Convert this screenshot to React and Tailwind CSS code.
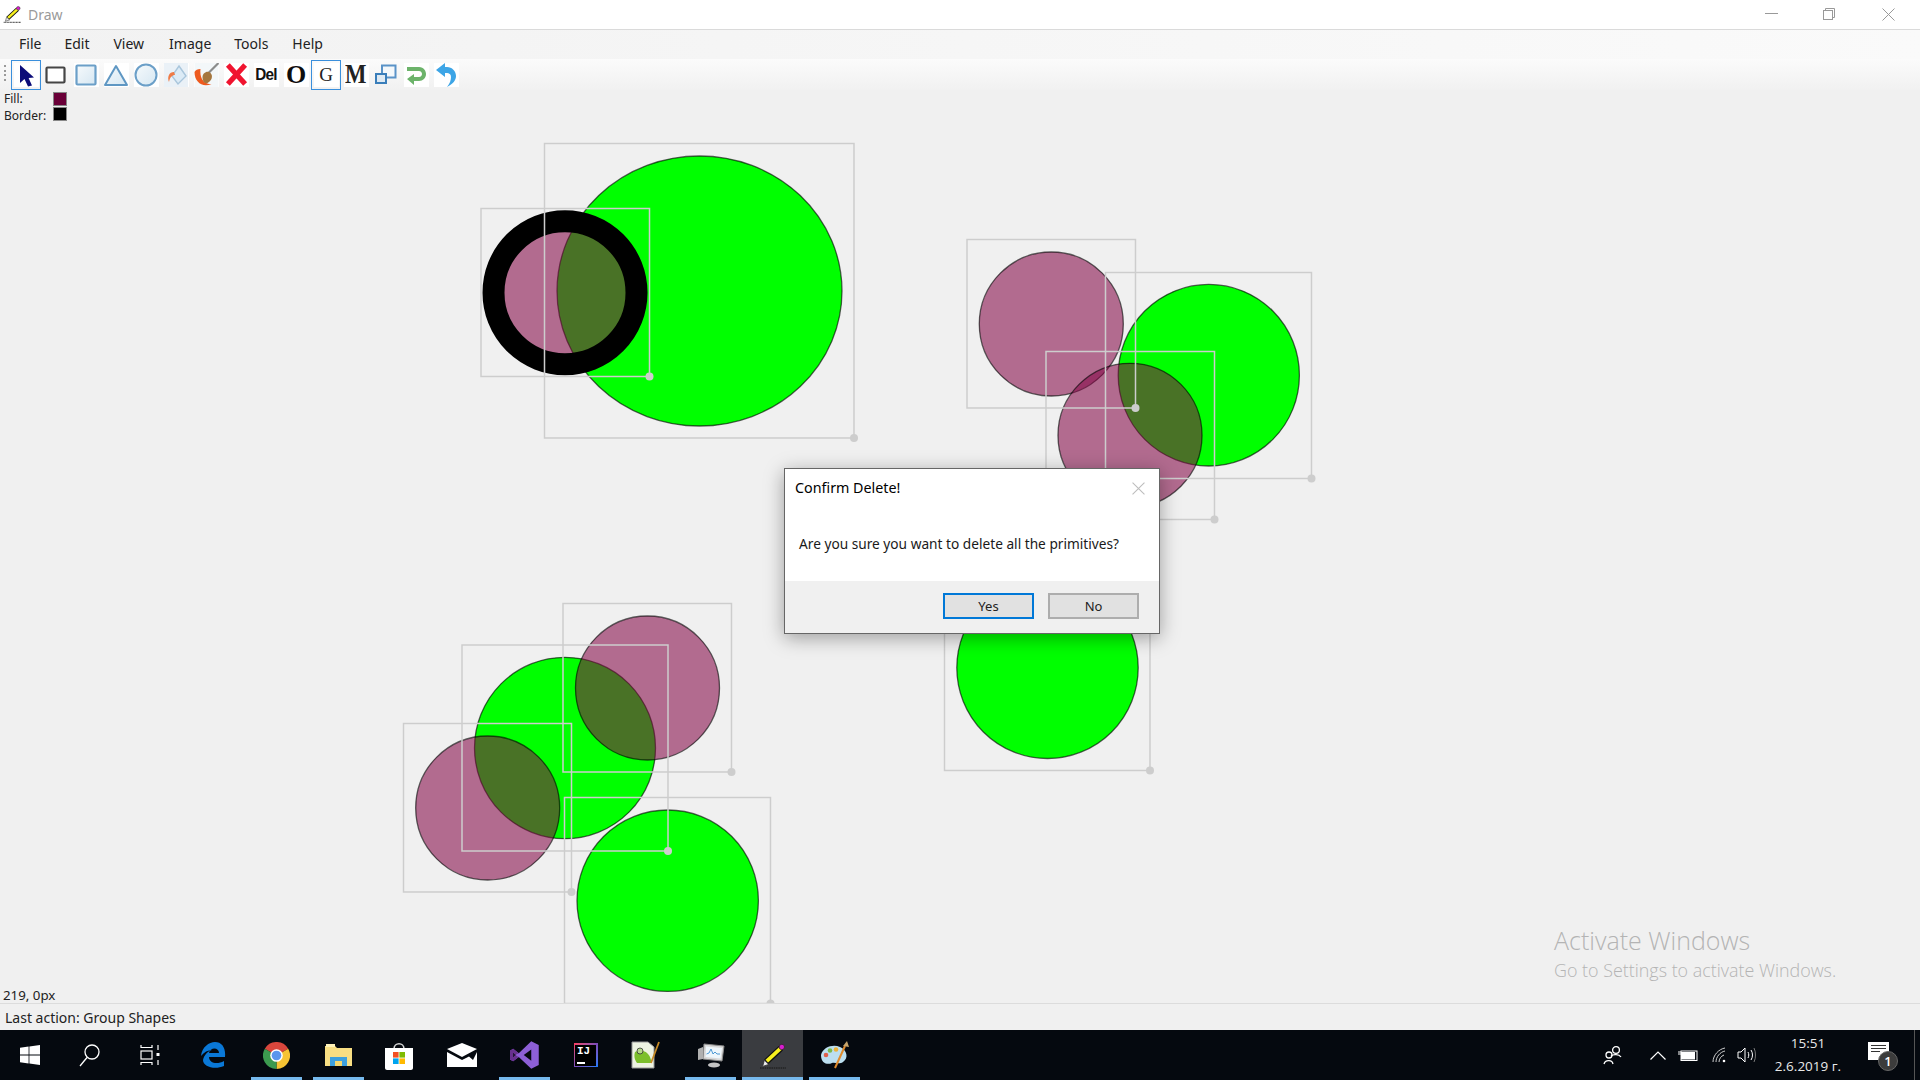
const GREEN = '#00ff00';
const PINK = '#830443';
const shapes = [
  { c: 'g', cx: 699.5, cy: 291, rx: 142.5, ry: 135 },
  { c: 'p', cx: 565, cy: 292.7, rx: 71.5, ry: 71.5, w: 22 },
  { c: 'p', cx: 1051.3, cy: 324, rx: 72, ry: 72 },
  { c: 'g', cx: 1208.8, cy: 375.2, rx: 90.6, ry: 90.8 },
  { c: 'p', cx: 1130, cy: 435.3, rx: 72, ry: 72 },
  { c: 'g', cx: 565, cy: 748, rx: 90.5, ry: 90.7 },
  { c: 'p', cx: 647.5, cy: 688, rx: 72, ry: 72 },
  { c: 'p', cx: 487.7, cy: 808, rx: 72, ry: 72 },
  { c: 'g', cx: 667.7, cy: 900.7, rx: 90.7, ry: 90.7 },
  { c: 'g', cx: 1047.5, cy: 667.8, rx: 90.7, ry: 90.7 },
];
const boxes = [
  [544.5, 143.5, 854, 438],
  [481, 208.5, 649.5, 376.5],
  [967, 239.5, 1135.5, 408],
  [1105.5, 272.5, 1311.5, 478.5],
  [1046, 351.5, 1214.5, 519.5],
  [563, 603.5, 731.5, 772],
  [462, 645, 668, 851],
  [403.5, 723.5, 571.5, 892],
  [564.5, 797.5, 770.5, 1003.5],
  [944.5, 564.5, 1150, 770.5],
];

function Pencil({ className }) {
  return (
    <svg viewBox="0 0 26 26" className={className}>
      <path d="M1 25H26" stroke="#222" strokeWidth="1.4" strokeDasharray="1.5 .7" />
      <path d="M7 19L21 6" stroke="#111" strokeWidth="6" />
      <path d="M7.5 18.5L21 6" stroke="#f7f01e" strokeWidth="3.6" />
      <path d="M3.5 23.5L5.2 17.5L9.4 21.6Z" fill="#eee" stroke="#333" strokeWidth=".8" />
      <circle cx="22" cy="4.8" r="2.6" fill="#d81ed0" stroke="#222" strokeWidth=".7" />
    </svg>
  );
}

function ToolIcon({ children, active, plain }) {
  return (
    <div className={`w-[30px] h-[30px] flex items-center justify-center ${active ? 'border border-[#3a8fdc]' : ''}`}>
      <div className={`w-[25px] h-[24px] flex items-center justify-center ${plain ? '' : 'bg-white'}`}>{children}</div>
    </div>
  );
}

const lightFill = (
  <defs>
    <linearGradient id="lf" x1="0" y1="0" x2="1" y2="1">
      <stop offset="0" stopColor="#f6fafc" />
      <stop offset="1" stopColor="#d6e7f2" />
    </linearGradient>
  </defs>
);

function Toolbar() {
  return (
    <div className="h-[31px] pl-[11px] flex items-center bg-linear-to-b from-[#fbfbfb] to-[#f1f1f1] relative">
      <div className="absolute left-[4px] top-[6px] w-[2px] h-[16px] flex flex-col justify-between">
        <span className="block w-[2px] h-[2px] bg-[#9a9a9a]" />
        <span className="block w-[2px] h-[2px] bg-[#9a9a9a]" />
        <span className="block w-[2px] h-[2px] bg-[#9a9a9a]" />
        <span className="block w-[2px] h-[2px] bg-[#9a9a9a]" />
      </div>
      <ToolIcon active>
        <svg viewBox="0 0 24 24" className="w-[24px] h-[24px]"><path d="M6 2L20 14.5L14.6 15L18 22.5L14 23.5L10.5 16L6 20Z" fill="#0b0b78" /></svg>
      </ToolIcon>
      <ToolIcon plain>
        <svg viewBox="0 0 24 24" className="w-[24px] h-[24px]"><rect x="2.5" y="4.5" width="18" height="15" rx="1" fill="#fff" stroke="#454545" strokeWidth="2.2" /></svg>
      </ToolIcon>
      <ToolIcon>
        <svg viewBox="0 0 24 24" className="w-[24px] h-[24px]">{lightFill}<rect x="2.5" y="2.5" width="19" height="19" rx="1" fill="url(#lf)" stroke="#6b9fc8" strokeWidth="2.2" /></svg>
      </ToolIcon>
      <ToolIcon>
        <svg viewBox="0 0 24 24" className="w-[24px] h-[24px]"><path d="M12 3L23 22H1Z" fill="url(#lf)" stroke="#5f97c3" strokeWidth="2" strokeLinejoin="round" /></svg>
      </ToolIcon>
      <ToolIcon>
        <svg viewBox="0 0 24 24" className="w-[24px] h-[24px]"><circle cx="12" cy="12" r="10.5" fill="url(#lf)" stroke="#6b9fc8" strokeWidth="2" /></svg>
      </ToolIcon>
      <ToolIcon>
        <svg viewBox="0 0 24 24" className="w-[24px] h-[24px]">
          <rect width="24" height="24" fill="#eaf1f7" />
          <path d="M15 3L22 13L14 21L8 13Z" fill="#dcebf6" stroke="#a9c6dc" strokeWidth="1.4" />
          <path d="M10 9C5 9 3 14 5 19C6 14 8 12 11 12Z" fill="#ef7a45" />
        </svg>
      </ToolIcon>
      <ToolIcon>
        <svg viewBox="0 0 24 24" className="w-[25px] h-[24px]">
          <rect width="24" height="24" fill="#f3f7f9" />
          <path d="M24 0L13 11" stroke="#8c8c8c" strokeWidth="2.2" />
          <path d="M0 9C0 19 8 25 17 21C9 21 5 15 6 6C3 6 1 7 0 9Z" fill="#ee5a1e" />
          <path d="M8 14C8 10 13 7 16 10C19 13 17 18 13 20C10 21 8 18 8 14Z" fill="#a5763e" />
        </svg>
      </ToolIcon>
      <ToolIcon>
        <svg viewBox="0 0 24 24" className="w-[23px] h-[23px]"><path d="M3 2L21 22M21 2L3 22" stroke="#f0142f" strokeWidth="5.4" /></svg>
      </ToolIcon>
      <ToolIcon><span className="font-['Liberation_Sans'] font-bold text-[17px] leading-none text-[#111] tracking-[-0.8px] scale-x-90">Del</span></ToolIcon>
      <ToolIcon><span className="font-['Liberation_Serif'] font-bold text-[26px] leading-none text-[#0d0d0d]">O</span></ToolIcon>
      <ToolIcon active><span className="font-['Liberation_Serif'] text-[19px] leading-none text-[#222]">G</span></ToolIcon>
      <ToolIcon><span className="font-['Liberation_Serif'] font-bold text-[27px] leading-none text-[#222] scale-x-[0.84]">M</span></ToolIcon>
      <ToolIcon plain>
        <svg viewBox="0 0 24 24" className="w-[24px] h-[24px]">
          <rect x="8" y="2.5" width="13.5" height="12" fill="#f4f8fb" stroke="#5a93c8" strokeWidth="2" />
          <rect x="2" y="11" width="10" height="9" fill="#dfeaf3" stroke="#3a7eba" strokeWidth="2" />
        </svg>
      </ToolIcon>
      <ToolIcon>
        <svg viewBox="0 0 24 24" className="w-[24px] h-[24px]"><path d="M3 4H15C20 4 22 8 22 11C22 15 19 18 15 18H10V22L3 16L10 11V14H15C17 14 18 12.5 18 11C18 9.5 17 8 15 8H3Z" fill="#6cb36a" /></svg>
      </ToolIcon>
      <ToolIcon>
        <svg viewBox="0 0 24 24" className="w-[24px] h-[24px]"><path d="M2 7L11 0V4H13C18 4 22 8 22 13C22 17 19 21 13 24C16 20 17 17 17 14C17 11 15 10 13 10H11V14Z" fill="#3da5e6" /></svg>
      </ToolIcon>
    </div>
  );
}

function Canvas() {
  return (
    <div className="relative flex-1 bg-[#f0f0f0] overflow-hidden">
      <svg viewBox="0 90 1920 913" className="absolute inset-0 w-[1920px] h-[913px]">
        {shapes.map((s, i) => (
          <ellipse key={i} cx={s.cx} cy={s.cy} rx={s.rx} ry={s.ry}
            fill={s.c === 'g' ? GREEN : PINK} fillOpacity={s.c === 'g' ? 1 : 0.5625}
            stroke="#000" strokeOpacity={s.w ? 1 : 0.62} strokeWidth={s.w || 1.3} />
        ))}
        {boxes.map(([a, b, c, d], i) => (
          <g key={i}>
            <rect x={a} y={b} width={c - a} height={d - b} fill="none" stroke="#cdcdcd" strokeWidth="1.5" />
            <circle cx={c} cy={d} r="4" fill="#cdcdcd" />
          </g>
        ))}
      </svg>
      <div className="absolute left-[4px] top-0 text-[12px] leading-[17px] text-[#222] font-['Noto_Sans',sans-serif]">
        <div>Fill:</div>
        <div>Border:</div>
      </div>
      <div className="absolute left-[53px] top-[2px] w-[14px] h-[14px] bg-[#6a0038] border border-[#888]" />
      <div className="absolute left-[53px] top-[17px] w-[14px] h-[14px] bg-black border border-[#888]" />
      <div className="absolute left-[1554px] top-[834px] font-['Open_Sans',sans-serif] font-light text-[#b4b4b4] whitespace-nowrap">
        <div className="text-[25px] leading-[32px]">Activate Windows</div>
        <div className="text-[17.9px] leading-[24px] mt-[2px]">Go to Settings to activate Windows.</div>
      </div>
      <div className="absolute left-[3px] bottom-0 text-[13.3px] leading-[16px] text-[#222] font-['Noto_Sans',sans-serif]">219, 0px</div>
    </div>
  );
}

function Dialog() {
  return (
    <div className="absolute left-[784px] top-[468px] w-[376px] h-[166px] bg-[#f0f0f0] border border-[#666] shadow-[0_4px_18px_rgba(0,0,0,0.35)] flex flex-col font-['Noto_Sans',sans-serif]">
      <div className="h-[112px] bg-white relative shrink-0">
        <div className="absolute left-[10px] top-[9px] text-[14.3px] leading-[20px] text-black">Confirm Delete!</div>
        <svg viewBox="0 0 12 12" className="absolute left-[347px] top-[13px] w-[13px] h-[13px]"><path d="M.5.5L11.5 11.5M11.5.5L.5 11.5" stroke="#bdbdbd" strokeWidth="1" /></svg>
        <div className="absolute left-[14px] top-[66px] text-[13.7px] leading-[18px] text-[#1a1a1a] whitespace-nowrap">Are you sure you want to delete all the primitives?</div>
      </div>
      <div className="flex-1 flex justify-end gap-[14px] pt-[12px] pr-[20px]">
        <button className="w-[91px] h-[26px] bg-[#e1e1e1] border-2 border-[#0078d7] text-[13px] leading-none text-[#222]">Yes</button>
        <button className="w-[91px] h-[26px] bg-[#e1e1e1] border-2 border-[#adadad] text-[13px] leading-none text-[#222]">No</button>
      </div>
    </div>
  );
}

function TaskSlot({ w, underline, active, children }) {
  return (
    <div className={`relative h-full shrink-0 flex items-center justify-center ${active ? 'bg-[#3a3c40]' : ''} ${w}`}>
      {children}
      {underline && <span className="absolute left-0 right-0 bottom-0 h-[3px] bg-[#76b9ed]" />}
    </div>
  );
}

function Taskbar() {
  return (
    <div className="h-[50px] bg-[#05090f] flex items-center relative font-['Open_Sans',sans-serif]">
      <div className="h-full flex">
        <TaskSlot w="w-[60px]">
          <svg viewBox="0 0 20 20" className="w-[20px] h-[20px]" fill="#fff"><path d="M0 2.8L8.6 1.6V9.6H0ZM9.4 1.5L20 0V9.6H9.4ZM0 10.4H8.6V18.4L0 17.2ZM9.4 10.4H20V20L9.4 18.5Z" /></svg>
        </TaskSlot>
        <TaskSlot w="w-[60px]">
          <svg viewBox="0 0 22 24" className="w-[22px] h-[24px]" fill="none" stroke="#fff" strokeWidth="1.3"><circle cx="13" cy="9" r="7" /><path d="M8 14.5L1 23" /></svg>
        </TaskSlot>
        <TaskSlot w="w-[60px]">
          <svg viewBox="0 0 20 20" className="w-[20px] h-[20px]" fill="none" stroke="#fff" strokeWidth="1.2"><path d="M1 0V2.5H12V0M1 20V17.5H12V20" /><rect x="1" y="6" width="11" height="8" /><path d="M18 0V5M18 15V20" /><rect x="16.5" y="8" width="3" height="3" fill="#fff" stroke="none" /></svg>
        </TaskSlot>
        <TaskSlot w="w-[60px] ml-[3px] mr-[8px]">
          <svg viewBox="0 0 26 26" className="w-[26px] h-[26px]"><path d="M1 14C2 5 9 0 15 0C22 0 26 6 25 15H9C9 21 17 23 24 19V24C15 28 3 25 3 18C4 13 8 9 12 8C8 8 4 10 1 14ZM9 11H19C19 5 10 5 9 11Z" fill="#0a78d7" fillRule="evenodd" /></svg>
        </TaskSlot>
        <TaskSlot w="w-[51px] mr-[11px]" underline>
          <svg viewBox="0 0 24 24" className="w-[27px] h-[27px]">
            <path d="M12 12L1.6 6A12 12 0 0 1 22.4 6Z" fill="#d9463c" />
            <path d="M12 12L22.4 6A12 12 0 0 1 12 24Z" fill="#f6c333" />
            <path d="M12 12L12 24A12 12 0 0 1 1.6 6Z" fill="#3c9a4f" />
            <circle cx="12" cy="12" r="5.6" fill="#fff" />
            <circle cx="12" cy="12" r="4.3" fill="#5a96ee" />
          </svg>
        </TaskSlot>
        <TaskSlot w="w-[51px] mr-[9px]" underline>
          <svg viewBox="0 0 28 24" className="w-[28px] h-[24px]">
            <path d="M0 3H10L12 5H27V23H0Z" fill="#f8de83" />
            <path d="M1 1H10V4H1Z" fill="#fff2b8" />
            <path d="M5 23V14H22V23H17V18H10V23Z" fill="#3da0de" />
            <path d="M10 18H17V23H10Z" fill="#f5d76e" />
          </svg>
        </TaskSlot>
        <TaskSlot w="w-[51px] mr-[12px]">
          <svg viewBox="0 0 30 30" className="w-[30px] h-[30px]">
            <path d="M10 9C10 2 20 2 20 9" fill="none" stroke="#d5d5d5" strokeWidth="1.6" />
            <path d="M1 8H29V28C29 29 28 30 27 30H3C2 30 1 29 1 28Z" fill="#fff" />
            <rect x="9" y="12" width="5.6" height="5.6" fill="#f25022" />
            <rect x="15.4" y="12" width="5.6" height="5.6" fill="#7fba00" />
            <rect x="9" y="18.4" width="5.6" height="5.6" fill="#00a4ef" />
            <rect x="15.4" y="18.4" width="5.6" height="5.6" fill="#ffb900" />
          </svg>
        </TaskSlot>
        <TaskSlot w="w-[51px] mr-[12px]">
          <svg viewBox="0 0 30 24" className="w-[30px] h-[24px]" fill="#fff">
            <path d="M0 6L15 0L30 6L15 14Z" />
            <path d="M0 9L15 17L22 13.5L26 17L30 9V24H0Z" />
          </svg>
        </TaskSlot>
        <TaskSlot w="w-[51px] mr-[10px]" underline>
          <svg viewBox="0 0 24 24" className="w-[30px] h-[30px]">
            <path d="M17 1L23 4V20L17 23L7 13.5L2.5 17L0 15.5V8.5L2.5 7L7 10.5ZM17 7.5L11 12L17 16.5ZM2.5 9.8V14.2L5 12Z" fill="#8d5fd6" fillRule="evenodd" />
            <path d="M0 8.5L2.5 7L7 10.5L4 12L2.5 9.8V14.2L4 12L7 13.5L2.5 17L0 15.5Z" fill="#68308f" />
          </svg>
        </TaskSlot>
        <TaskSlot w="w-[51px] mr-[9px]">
          <div className="w-[24px] h-[24px] p-[1.5px] bg-linear-to-br from-[#fc3a5f] via-[#7a49b8] to-[#087cfa]">
            <div className="w-full h-full bg-black relative font-['Liberation_Mono',monospace] font-bold text-white text-[11px] leading-[12px] pl-[2px]">
              IJ
              <span className="absolute left-[2px] bottom-[2px] w-[8px] h-[1.5px] bg-white" />
            </div>
          </div>
        </TaskSlot>
        <TaskSlot w="w-[51px] mr-[14px]">
          <svg viewBox="0 0 30 28" className="w-[30px] h-[28px]">
            <path d="M1 1H17L23 6V27H1Z" fill="#eef3e2" stroke="#9a9a9a" />
            <path d="M4 11C8 8 16 9 19 16L21 22H6C3 18 3 14 4 11Z" fill="#7cbf2b" />
            <circle cx="9" cy="10" r="3" fill="#b7d98a" stroke="#333" strokeWidth=".8" />
            <path d="M28 1L20 22" stroke="#c68a25" strokeWidth="1.8" />
          </svg>
        </TaskSlot>
        <TaskSlot w="w-[51px] mr-[6px]" underline>
          <svg viewBox="0 0 28 26" className="w-[28px] h-[26px]">
            <path d="M7 2L27 4L25 19L6 17Z" fill="#d8d8d8" stroke="#8a8a8a" />
            <path d="M9 4.5L25 6L23.5 16.5L8.5 15Z" fill="#eef6fb" />
            <path d="M9.5 12L12 11L14 7L16 12L18 10L20 12H23" fill="none" stroke="#3b8fd0" strokeWidth=".9" />
            <path d="M1 7L6 5V17L1 18Z" fill="#b0b0b0" />
            <ellipse cx="17" cy="23" rx="6" ry="2.4" fill="#c4c4c4" />
          </svg>
        </TaskSlot>
        <TaskSlot w="w-[61px] mr-[6px]" underline active>
          <Pencil className="w-[27px] h-[27px]" />
        </TaskSlot>
        <TaskSlot w="w-[51px]" underline>
          <svg viewBox="0 0 30 30" className="w-[30px] h-[30px]">
            <path d="M1 15C3 7 13 4 20 7C27 10 29 18 23 22C19 25 15 22 12 23C8 25 1 24 1 15Z" fill="#bcdff0" />
            <circle cx="6" cy="15" r="2.3" fill="#e0604c" />
            <circle cx="10" cy="10.5" r="2.3" fill="#7cba4d" />
            <circle cx="16" cy="9.5" r="2.3" fill="#ecb13a" />
            <path d="M25 6L15 28" stroke="#e08a2b" strokeWidth="2" />
            <path d="M23 6L27 1L29 7Z" fill="#c7a46b" />
          </svg>
        </TaskSlot>
      </div>
      <div className="flex-1" />
      <div className="h-full flex items-center text-white relative shrink-0">
        <svg viewBox="0 0 20 20" className="w-[20px] h-[20px] mr-[27px]" fill="none" stroke="#fff" strokeWidth="1.3">
          <circle cx="13" cy="5" r="3.4" /><path d="M8 11C10 9 16 9 18 12" />
          <circle cx="6" cy="10" r="3" /><path d="M1 19C2 15 9 14 10 19" />
        </svg>
        <svg viewBox="0 0 16 9" className="w-[16px] h-[9px] mr-[12px]" fill="none" stroke="#fff" strokeWidth="1.2"><path d="M.5 8.5L8 1L15.5 8.5" /></svg>
        <svg viewBox="0 0 20 12" className="w-[20px] h-[12px] mr-[14px]"><path d="M0 3H3M0 5H3" stroke="#fff" /><rect x="3" y="2" width="16" height="9.5" fill="none" stroke="#fff" /><rect x="3" y="3" width="14" height="7.5" fill="#fff" /></svg>
        <svg viewBox="0 0 14 16" className="w-[14px] h-[16px] mr-[11px]" fill="none" stroke="#cfcfcf" strokeWidth="1"><path d="M1 15C1 8 7 2 13 1M4 15C4 10 8 5 13 4M7 15C7 12 9 9 12 8" /><circle cx="12" cy="14" r="1.3" fill="#fff" stroke="none" /></svg>
        <svg viewBox="0 0 20 16" className="w-[20px] h-[16px] mr-[11px]" fill="none" stroke="#fff" strokeWidth="1"><path d="M1 5H4L8 1V15L4 11H1Z" /><path d="M11 5C12 7 12 9 11 11M14 3C16 6 16 10 14 13" /><path d="M17 1C19 5 19 11 17 15" stroke="#777" /></svg>
        <div className="w-[80px] text-center text-[13.5px] leading-[23px] text-[#e8e8e8]">
          <div>15:51</div>
          <div className="whitespace-nowrap">2.6.2019 г.</div>
        </div>
        <div className="relative w-[21px] h-[18px] bg-white ml-[20px] mr-[31px] -translate-y-[4px]">
          <div className="mt-[3px] mx-[3px] flex flex-col gap-[2px]">
            <span className="block h-[1px] bg-[#333]" />
            <span className="block h-[1px] bg-[#333]" />
            <span className="block h-[1px] w-[9px] bg-[#333]" />
          </div>
          <span className="absolute left-[10px] top-[9px] w-[20px] h-[20px] rounded-full bg-[#3c3c3c] border border-[#666] flex items-center justify-center text-[13px] font-semibold leading-none">1</span>
        </div>
        <span className="absolute right-[5px] top-0 bottom-0 w-[1px] bg-[#555]" />
      </div>
    </div>
  );
}

export default function App() {
  return (
    <div className="relative w-[1920px] h-[1080px] overflow-hidden flex flex-col bg-[#f0f0f0]">
      <div className="h-[30px] bg-white border-b border-[#dadada] flex items-center relative shrink-0">
        <Pencil className="absolute left-[3px] top-[5px] w-[18px] h-[18px]" />
        <span className="ml-[28px] text-[14px] text-[#9a9a9a] font-['Noto_Sans',sans-serif]">Draw</span>
        <svg viewBox="0 0 13 1" className="absolute left-[1765px] top-[13px] w-[13px] h-[1px]"><path d="M0 .5H13" stroke="#999" /></svg>
        <svg viewBox="0 0 12 12" className="absolute left-[1823px] top-[8px] w-[12px] h-[12px]" fill="none" stroke="#999"><rect x=".5" y="2.5" width="9" height="9" /><path d="M2.5 2.5V.5H11.5V9.5H9.5" /></svg>
        <svg viewBox="0 0 13 13" className="absolute left-[1882px] top-[8px] w-[13px] h-[13px]"><path d="M.5.5L12.5 12.5M12.5.5L.5 12.5" stroke="#999" /></svg>
      </div>
      <div className="h-[29px] pb-[2px] flex items-center bg-linear-to-r from-[#f2f2f2] to-[#fafafa] text-[14px] text-[#222] font-['Noto_Sans',sans-serif] shrink-0">
        <span className="ml-[19px]">File</span>
        <span className="ml-[23px]">Edit</span>
        <span className="ml-[24px]">View</span>
        <span className="ml-[25px]">Image</span>
        <span className="ml-[23px]">Tools</span>
        <span className="ml-[24px]">Help</span>
      </div>
      <Toolbar />
      <Canvas />
      <div className="h-[27px] shrink-0 bg-[#f0f0f0] border-t border-[#dcdcdc] pl-[5px] text-[14px] leading-[28px] text-[#222] font-['Noto_Sans',sans-serif]">Last action: Group Shapes</div>
      <Taskbar />
      <Dialog />
    </div>
  );
}
